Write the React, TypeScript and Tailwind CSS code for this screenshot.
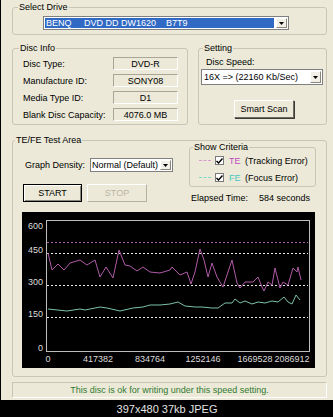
import type { ReactNode } from "react";

const TE_LINE =
  "26,41 30,58 36,52 42,58 48,51 58,48 65,53 73,48 78,65 84,55 91,66 97,38 103,53 108,54 115,59 121,55 128,60 138,61 148,58 150,55 158,63 165,60 169,72 173,60 178,37 182,48 186,65 190,51 195,65 201,75 210,48 215,71 218,76 223,70 231,70 236,65 240,75 242,79 246,70 250,73 253,56 258,76 261,70 266,73 271,56 275,60 276,55 279,68";

const FE_LINE =
  "26,97 45,99 58,97 63,98 78,95 85,96 98,99 111,96 121,95 128,93 138,93 148,92 156,90 163,94 173,95 180,95 190,96 196,96 203,91 210,91 213,87 218,91 223,89 230,92 236,90 243,91 250,89 256,90 262,85 266,90 270,92 274,83 278,88";

function Arrow() {
  return (
    <div className="w-[11px] self-stretch m-[1px] bg-[#f1efe6] border border-t-white border-l-white border-r-[#8a877a] border-b-[#8a877a] flex items-center justify-center">
      <svg width="5" height="3" viewBox="0 0 5 3">
        <path d="M0 0h5L2.5 3z" fill="#000" />
      </svg>
    </div>
  );
}

function Check() {
  return (
    <div className="w-[9px] h-[9px] bg-white border border-[#7a7a7a] flex items-center justify-center">
      <svg width="7" height="6" viewBox="0 0 7 6">
        <path d="M0.5 3l2 2 4-4.5" stroke="#000" strokeWidth="1.4" fill="none" />
      </svg>
    </div>
  );
}

function Group({ title, className, legendClass, children }: { title: string; className: string; legendClass: string; children: ReactNode }) {
  return (
    <fieldset className={`border border-[#c9c6b5] rounded-[3px] ${className}`}>
      <legend className={`px-[1px] text-[9px] leading-[10px] ${legendClass}`}>{title}</legend>
      {children}
    </fieldset>
  );
}

const info = [
  ["Disc Type:", "DVD-R"],
  ["Manufacture ID:", "SONY08"],
  ["Media Type ID:", "D1"],
  ["Blank Disc Capacity:", "4076.0 MB"],
];

export default function App() {
  return (
    <div className="w-[333px] h-[417px] flex flex-col bg-[#ECE9D8] border-l border-black overflow-hidden font-['Liberation_Sans',Arial,sans-serif] text-[9px] leading-[10px] text-black">
      <div className="flex flex-col pl-[11px] pr-[6px]">
        {/* Select Drive */}
        <Group title="Select Drive" className="mt-[2px]" legendClass="ml-[5px]">
          <div className="pl-[30px] pt-[4px] pb-[4px]">
            <div className="w-[246px] h-[14px] flex bg-white border border-[#7f7f7f]">
              <div className="flex-1 m-[1px] bg-[#316AC5] text-white whitespace-pre flex items-center pl-[1px]">
                {"BENQ     DVD DD DW1620    B7T9"}
              </div>
              <Arrow />
            </div>
          </div>
        </Group>

        {/* Disc Info + Setting */}
        <div className="flex gap-[10px] mt-[8px]">
          <Group title="Disc Info" className="w-[176px]" legendClass="ml-[6px]">
            <div className="flex flex-col gap-[4px] pl-[10px] pt-[4px] pb-[3px]">
              {info.map(([k, v]) => (
                <div key={k} className="flex items-center h-[13px]">
                  <span className="w-[90px]">{k}</span>
                  <div className="w-[65px] h-[13px] flex items-center justify-center border border-[#a9a697] border-r-white border-b-white">
                    {v}
                  </div>
                </div>
              ))}
            </div>
          </Group>

          <Group title="Setting" className="flex-1" legendClass="ml-[4px]">
            <div className="flex flex-col pl-[2px] pt-[4px] pb-[6px]">
              <span className="ml-[5px] h-[10px]">Disc Speed:</span>
              <div className="mt-[2px] w-[122px] h-[16px] flex bg-white border border-[#7f7f7f]">
                <div className="flex-1 flex items-center pl-[2px] whitespace-pre">{"16X => (22160 Kb/Sec)"}</div>
                <Arrow />
              </div>
              <button className="mt-[15px] ml-[33px] w-[60px] h-[18px] bg-[#ECE9D8] border border-t-white border-l-white border-r-[#6f6c60] border-b-[#6f6c60] shadow-[1px_1px_0_#3a3a3a]">
                Smart Scan
              </button>
            </div>
          </Group>
        </div>

        {/* TE/FE Test Area */}
        <Group title="TE/FE Test Area" className="mt-[10px]" legendClass="ml-[2px]">
          <div className="flex flex-col pb-[8px]">
            <div className="flex justify-between items-start">
              <div className="flex flex-col pl-[10px] pt-[13px]">
                <div className="flex items-center h-[14px]">
                  <span className="ml-[2px] w-[65px]">Graph Density:</span>
                  <div className="w-[83px] h-[14px] flex bg-white border border-[#7f7f7f]">
                    <div className="flex-1 flex items-center pl-[1px]">Normal (Default)</div>
                    <Arrow />
                  </div>
                </div>
                <div className="flex mt-[12px] gap-[5px]">
                  <button className="w-[59px] h-[18px] bg-[#ECE9D8] border border-black shadow-[inset_1px_1px_0_#fff,inset_-1px_-1px_0_#8a877a]">
                    START
                  </button>
                  <button className="w-[60px] h-[18px] bg-[#ECE9D8] border border-t-white border-l-white border-r-[#b5b2a3] border-b-[#b5b2a3] text-[#b9b6a6]">
                    STOP
                  </button>
                </div>
              </div>

              <div className="flex flex-col mr-[10px] -mt-[3px] w-[127px]">
                <Group title="Show Criteria" className="" legendClass="ml-[3px]">
                  <div className="flex flex-col gap-[4px] pl-[9px] pt-[2px] pb-[2px]">
                    <div className="flex items-center h-[13px]">
                      <div className="w-[12px] border-t border-dashed border-[#d79ad0] mr-[4px]" />
                      <Check />
                      <span className="ml-[5px] w-[16px] text-[#c04cc0]">TE</span>
                      <span>(Tracking Error)</span>
                    </div>
                    <div className="flex items-center h-[13px]">
                      <div className="w-[12px] border-t border-dashed border-[#7fd8c8] mr-[4px]" />
                      <Check />
                      <span className="ml-[5px] w-[16px] text-[#45c8c0]">FE</span>
                      <span>(Focus Error)</span>
                    </div>
                  </div>
                </Group>
                <div className="flex mt-[6px] ml-[2px] h-[10px]">
                  <span className="w-[68px]">Elapsed Time:</span>
                  <span>584 seconds</span>
                </div>
              </div>
            </div>

            {/* Graph */}
            <div className="mt-[9px] ml-[9px] w-[293px] h-[156px] bg-black">
              <svg width="293" height="156" viewBox="0 0 293 156" fontFamily="Liberation Sans, Arial, sans-serif" fontSize="9">
                <line x1="25" x2="286" y1="30.5" y2="30.5" stroke="#b060b0" strokeDasharray="2 2" />
                <line x1="25" x2="286" y1="41.5" y2="41.5" stroke="#e6e6e6" strokeDasharray="2 2" />
                <line x1="25" x2="286" y1="73.5" y2="73.5" stroke="#e6e6e6" strokeDasharray="2 2" />
                <line x1="25" x2="286" y1="105.5" y2="105.5" stroke="#e6e6e6" strokeDasharray="2 2" />
                <rect x="24.5" y="8.5" width="263" height="131" fill="none" stroke="#bdbdbd" />
                <polyline points={TE_LINE} fill="none" stroke="#b05aa8" strokeWidth="1" />
                <polyline points={FE_LINE} fill="none" stroke="#7cc0ac" strokeWidth="1" />
                <g fill="#dcdcdc" textAnchor="end">
                  <text x="21" y="17">600</text>
                  <text x="21" y="41">450</text>
                  <text x="21" y="73">300</text>
                  <text x="21" y="105">150</text>
                  <text x="21" y="139">0</text>
                </g>
                <g fill="#dcdcdc" textAnchor="middle">
                  <text x="26" y="150">0</text>
                  <text x="76" y="150">417382</text>
                  <text x="128" y="150">834764</text>
                  <text x="181" y="150">1252146</text>
                  <text x="233" y="150">1669528</text>
                  <text x="270" y="150">2086912</text>
                </g>
              </svg>
            </div>
          </div>
        </Group>

        {/* Status */}
        <div className="mt-[5px] h-[16px] flex items-center justify-center border border-[#c9c6b5] border-r-white border-b-white text-[#2f7a2f]">
          This disc is ok for writing under this speed setting.
        </div>
      </div>

      <div className="mt-[2px] flex-1 bg-black flex items-center justify-center text-[11px] leading-[12px] text-[#e4e4e4]">
        397x480 37kb JPEG
      </div>
    </div>
  );
}
